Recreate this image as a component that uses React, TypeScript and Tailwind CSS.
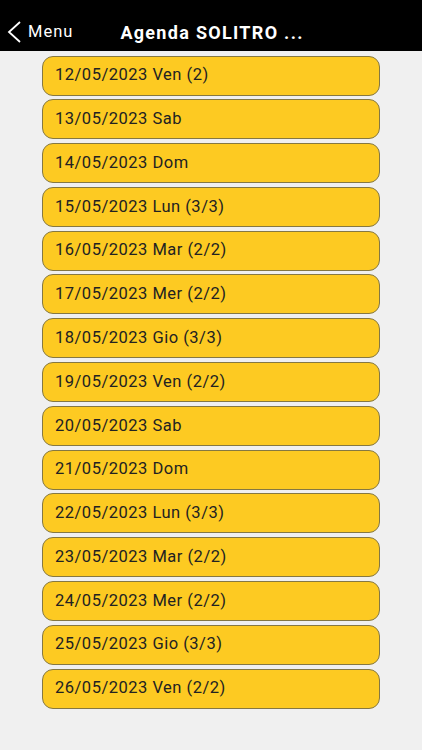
const days = [
  "12/05/2023 Ven (2)",
  "13/05/2023 Sab",
  "14/05/2023 Dom",
  "15/05/2023 Lun (3/3)",
  "16/05/2023 Mar (2/2)",
  "17/05/2023 Mer (2/2)",
  "18/05/2023 Gio (3/3)",
  "19/05/2023 Ven (2/2)",
  "20/05/2023 Sab",
  "21/05/2023 Dom",
  "22/05/2023 Lun (3/3)",
  "23/05/2023 Mar (2/2)",
  "24/05/2023 Mer (2/2)",
  "25/05/2023 Gio (3/3)",
  "26/05/2023 Ven (2/2)",
];

export default function App() {
  return (
    <div className="w-[422px] h-[750px] bg-[#f0f0f0] font-['Roboto',sans-serif] overflow-hidden">
      <header className="h-[51px] bg-black flex items-center pt-[13px] text-white">
        <button className="flex items-center pl-[6px] gap-[6px]">
          <svg width="16" height="22" viewBox="0 0 16 22" fill="none">
            <path d="M14 1 L3 11 L14 21" stroke="white" strokeWidth="1.8" />
          </svg>
          <span className="text-[16.5px] tracking-[1px]">Menu</span>
        </button>
        <h1 className="ml-[47px] text-[18px] font-bold tracking-[1.3px]">Agenda SOLITRO ...</h1>
      </header>
      <ul className="flex flex-col gap-[3.8px] pt-[4.5px] px-[42px]">
        {days.map((d) => (
          <li
            key={d}
            className="h-[40px] rounded-[11px] border border-[#857842] bg-[#fdca22] flex items-center pl-[12px] text-[16.5px] tracking-[0.5px] text-[#222]"
          >
            {d}
          </li>
        ))}
      </ul>
    </div>
  );
}
